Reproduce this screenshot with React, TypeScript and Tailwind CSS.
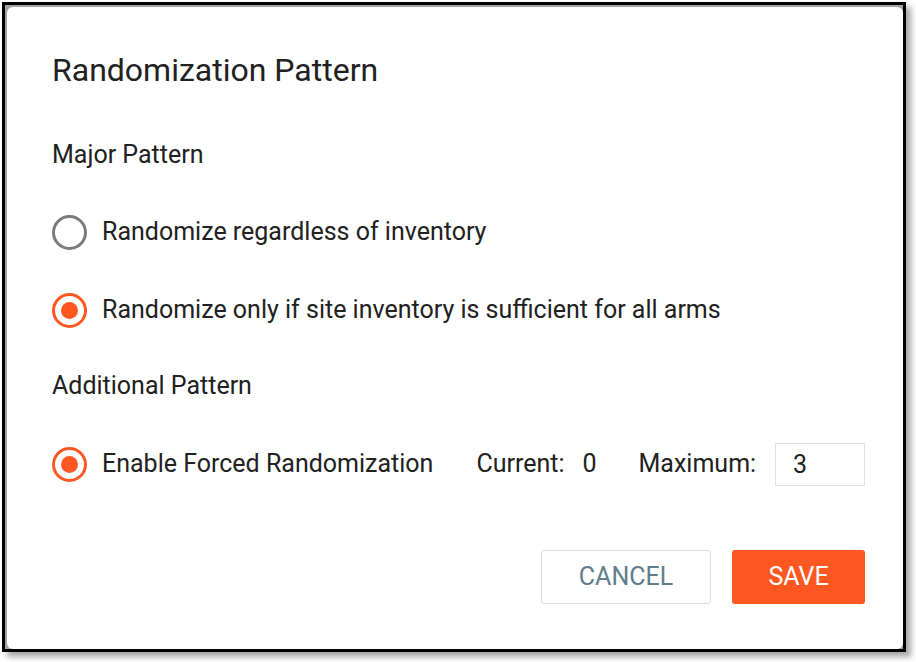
import { useState } from 'react';

function Radio({ checked }: { checked: boolean }) {
    return (
        <span
            className={`flex h-[35px] w-[35px] shrink-0 items-center justify-center rounded-full border-[3px] ${
                checked ? 'border-[#ff5722]' : 'border-[#7a7a7a]'
            }`}
        >
            {checked && <span className="h-[17px] w-[17px] rounded-full bg-[#ff5722]" />}
        </span>
    );
}

export default function App() {
    const [major, setMajor] = useState('sufficient');
    const [max, setMax] = useState('3');

    return (
        <div className="h-[662px] w-[916px] bg-white pl-[2px] pt-[2px]" style={{ fontFamily: 'Roboto, "Liberation Sans", sans-serif' }}>
            <div className="h-[650px] w-[904px] border-[3px] border-black bg-[#a3a3a3] pt-[2px] pl-[2px] shadow-[5px_5px_6px_rgba(0,0,0,0.35)]">
                <div className="flex h-[642px] w-[896px] flex-col rounded-md bg-white pl-[45px] pr-[38px] text-[#212121]">
                    <h1 className="mt-[45px] h-[36px] text-[32px] leading-[36px]">Randomization Pattern</h1>

                    <div className="mt-[52px] h-[30px] text-[25px] leading-[30px]">Major Pattern</div>

                    <label className="mt-[42px] flex h-[40px] cursor-pointer items-center gap-[15px] text-[25px]" onClick={() => setMajor('regardless')}>
                        <Radio checked={major === 'regardless'} />
                        <span>Randomize regardless of inventory</span>
                    </label>

                    <label className="mt-[38px] flex h-[40px] cursor-pointer items-center gap-[15px] text-[25px]" onClick={() => setMajor('sufficient')}>
                        <Radio checked={major === 'sufficient'} />
                        <span>Randomize only if site inventory is sufficient for all arms</span>
                    </label>

                    <div className="mt-[41px] h-[30px] text-[25px] leading-[30px]">Additional Pattern</div>

                    <div className="mt-[43px] flex h-[40px] items-center whitespace-nowrap text-[25px]">
                        <div className="flex shrink-0 items-center gap-[15px]">
                            <Radio checked={true} />
                            <span>Enable Forced Randomization</span>
                        </div>
                        <span className="ml-[43px] shrink-0">Current:</span>
                        <span className="ml-[18px] shrink-0">0</span>
                        <span className="ml-[42px] shrink-0">Maximum:</span>
                        <input
                            value={max}
                            onChange={(e) => setMax(e.target.value)}
                            className="ml-[19px] h-[43px] w-[90px] shrink-0 border border-[#dde2e7] px-[17px] text-[25px] outline-none"
                        />
                    </div>

                    <div className="mt-[66px] flex justify-end gap-[21px]">
                        <button className="h-[54px] w-[170px] rounded-[3px] border border-[#dcdfe3] bg-white text-[25px] uppercase text-[#607d8b]">
                            Cancel
                        </button>
                        <button className="h-[54px] w-[133px] rounded-[3px] bg-[#ff5722] text-[25px] uppercase text-white">
                            Save
                        </button>
                    </div>
                </div>
            </div>
        </div>
    );
}
